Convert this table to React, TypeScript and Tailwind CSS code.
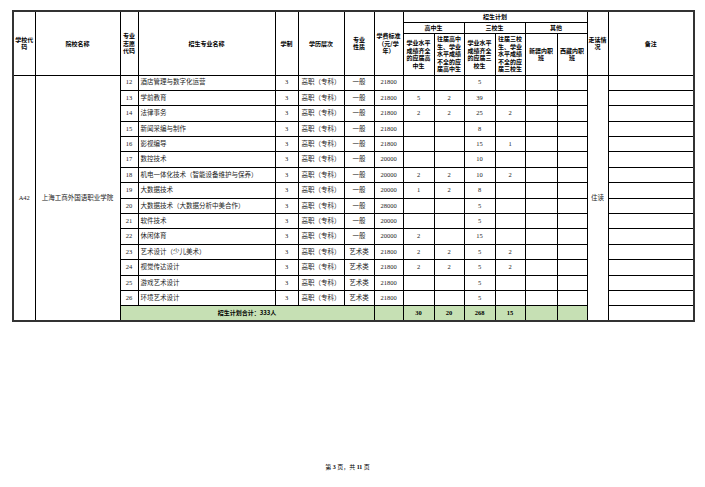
import React from "react";

type Row = {
  no: number;
  name: string;
  nature: string;
  fee: string;
  v: string[];
};

const rows: Row[] = [
  { no: 12, name: "酒店管理与数字化运营", nature: "一般", fee: "21800", v: ["", "", "5", "", "", ""] },
  { no: 13, name: "学前教育", nature: "一般", fee: "21800", v: ["5", "2", "39", "", "", ""] },
  { no: 14, name: "法律事务", nature: "一般", fee: "21800", v: ["2", "2", "25", "2", "", ""] },
  { no: 15, name: "新闻采编与制作", nature: "一般", fee: "21800", v: ["", "", "8", "", "", ""] },
  { no: 16, name: "影视编导", nature: "一般", fee: "21800", v: ["", "", "15", "1", "", ""] },
  { no: 17, name: "数控技术", nature: "一般", fee: "20000", v: ["", "", "10", "", "", ""] },
  { no: 18, name: "机电一体化技术（智能设备维护与保养）", nature: "一般", fee: "20000", v: ["2", "2", "10", "2", "", ""] },
  { no: 19, name: "大数据技术", nature: "一般", fee: "20000", v: ["1", "2", "8", "", "", ""] },
  { no: 20, name: "大数据技术（大数据分析中美合作）", nature: "一般", fee: "28000", v: ["", "", "5", "", "", ""] },
  { no: 21, name: "软件技术", nature: "一般", fee: "20000", v: ["", "", "5", "", "", ""] },
  { no: 22, name: "休闲体育", nature: "一般", fee: "20000", v: ["2", "", "15", "", "", ""] },
  { no: 23, name: "艺术设计（少儿美术）", nature: "艺术类", fee: "21800", v: ["2", "2", "5", "2", "", ""] },
  { no: 24, name: "视觉传达设计", nature: "艺术类", fee: "21800", v: ["2", "2", "5", "2", "", ""] },
  { no: 25, name: "游戏艺术设计", nature: "艺术类", fee: "21800", v: ["", "", "5", "", "", ""] },
  { no: 26, name: "环境艺术设计", nature: "艺术类", fee: "21800", v: ["", "", "5", "", "", ""] },
];

const widths = [22, 85, 18, 137, 23, 46, 30, 29, 31, 30, 31, 30, 32, 30, 21, 86];

const H = "border border-black p-0 text-center align-middle font-bold text-[6px] leading-[7.5px] text-black";
const D = "border border-black p-0 text-center align-middle text-[6.5px] leading-none text-[#222]";

export default function App() {
  return (
    <div
      className="w-[705px] h-[487px] bg-white"
      style={{ fontFamily: '"Liberation Serif", "Noto Sans CJK SC", serif' }}
    >
      <div className="pt-[10px] pl-[12px]">
        <table
          className="border-collapse table-fixed border-2 border-[#333]"
          style={{ width: 681 }}
        >
          <colgroup>
            {widths.map((w, i) => (
              <col key={i} style={{ width: w }} />
            ))}
          </colgroup>
          <thead style={{ fontFamily: '"Noto Sans CJK SC", sans-serif' }}>
            <tr className="h-[11px]">
              <th rowSpan={3} className={H}>学校代<br />码</th>
              <th rowSpan={3} className={H}>院校名称</th>
              <th rowSpan={3} className={H}>专业<br />志愿<br />代码</th>
              <th rowSpan={3} className={H}>招生专业名称</th>
              <th rowSpan={3} className={H}>学制</th>
              <th rowSpan={3} className={H}>学历层次</th>
              <th rowSpan={3} className={H}>专业<br />性质</th>
              <th rowSpan={3} className={H}>学费标准<br />（元/学<br />年）</th>
              <th colSpan={6} className={H}>招生计划</th>
              <th rowSpan={3} className={H}>走读情<br />况</th>
              <th rowSpan={3} className={H}>备注</th>
            </tr>
            <tr className="h-[11px]">
              <th colSpan={2} className={H}>高中生</th>
              <th colSpan={2} className={H}>三校生</th>
              <th colSpan={2} className={H}>其他</th>
            </tr>
            <tr className="h-[42px]">
              <th className={H}>学业水平<br />成绩齐全<br />的应届高<br />中生</th>
              <th className={H}>往届高中<br />生、学业<br />水平成绩<br />不全的应<br />届高中生</th>
              <th className={H}>学业水平<br />成绩齐全<br />的应届三<br />校生</th>
              <th className={H}>往届三校<br />生、学业<br />水平成绩<br />不全的应<br />届三校生</th>
              <th className={H}>新疆内职<br />班</th>
              <th className={H}>西藏内职<br />班</th>
            </tr>
          </thead>
          <tbody>
            {rows.map((r, i) => (
              <tr key={r.no} className="h-[15.4px]">
                {i === 0 && (
                  <>
                    <td rowSpan={16} className={D}>A42</td>
                    <td rowSpan={16} className={D}>上海工商外国语职业学院</td>
                  </>
                )}
                <td className={D}>{r.no}</td>
                <td className={`${D} text-left pl-[2px] whitespace-nowrap overflow-hidden`}>{r.name}</td>
                <td className={D}>3</td>
                <td className={D}>高职（专科）</td>
                <td className={D}>{r.nature}</td>
                <td className={D}>{r.fee}</td>
                {r.v.map((x, j) => (
                  <td key={j} className={D}>{x}</td>
                ))}
                {i === 0 && (
                  <td rowSpan={16} className={D}>住读</td>
                )}
                <td className={D}></td>
              </tr>
            ))}
            <tr className="h-[15.4px] bg-[#c6e0b4]">
              <td
                colSpan={5}
                className={`${D} font-bold text-black`}
                style={{ fontFamily: '"Noto Sans CJK SC", sans-serif', fontSize: 6 }}
              >
                招生计划合计：333人
              </td>
              <td className={D}></td>
              <td className={`${D} font-bold text-black`}>30</td>
              <td className={`${D} font-bold text-black`}>20</td>
              <td className={`${D} font-bold text-black`}>268</td>
              <td className={`${D} font-bold text-black`}>15</td>
              <td className={D}></td>
              <td className={D}></td>
              <td className={`${D} bg-white`}></td>
            </tr>
          </tbody>
        </table>
      </div>
      <div className="mt-[141px] w-[695px] text-center text-[6px] leading-[8px] text-black">
        第 <span className="font-bold">3</span> 页，共 <span className="font-bold">11</span> 页
      </div>
    </div>
  );
}
